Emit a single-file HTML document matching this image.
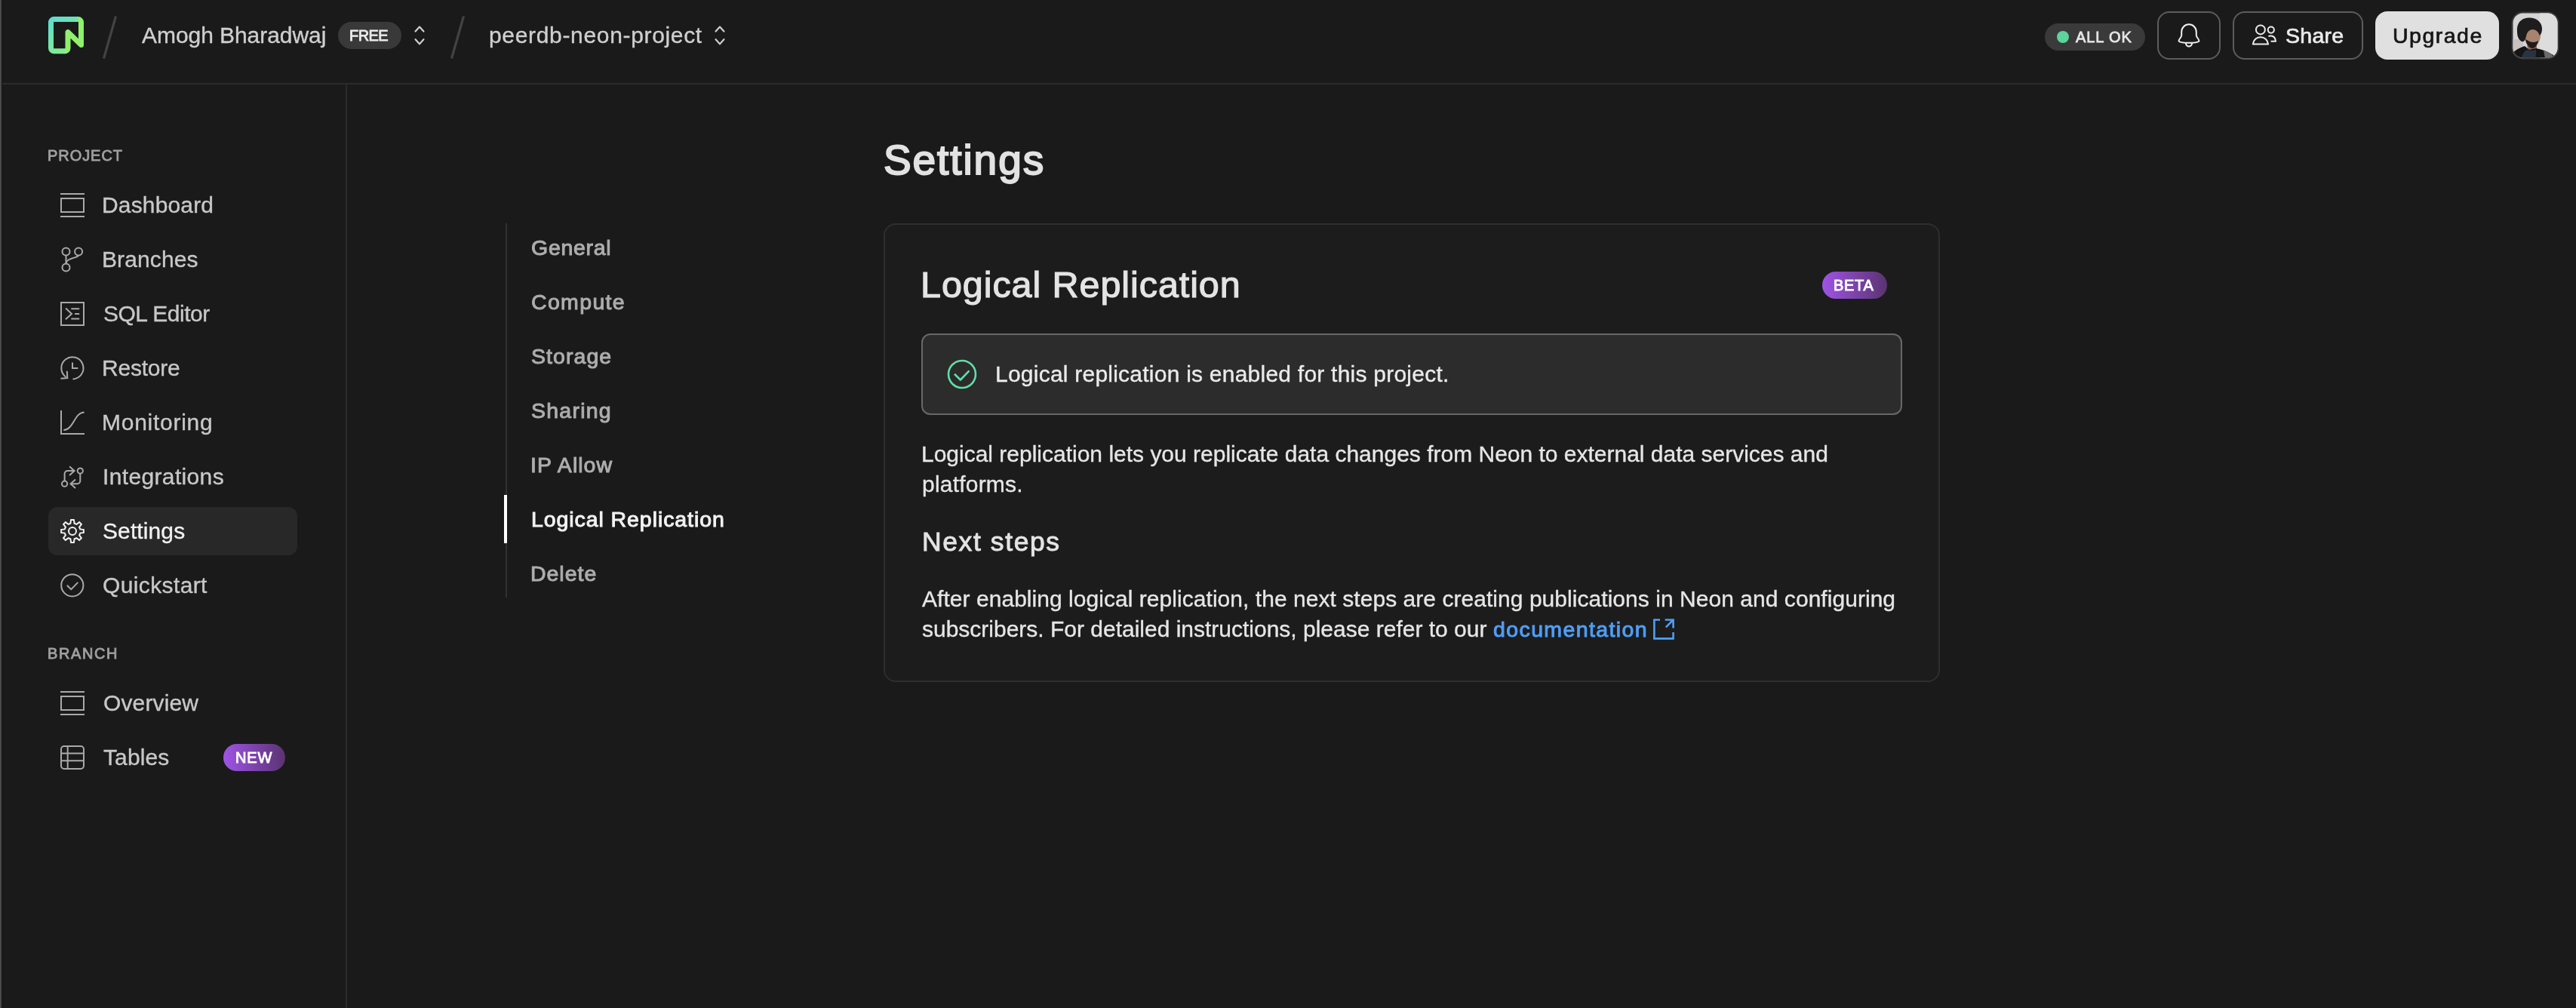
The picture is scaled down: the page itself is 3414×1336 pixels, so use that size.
<!DOCTYPE html>
<html><head><meta charset="utf-8">
<style>
html,body{margin:0;padding:0;width:3414px;height:1336px;overflow:hidden;background:#1a1a1a;}
body{position:relative;font-family:"Liberation Sans",sans-serif;}
.t{position:absolute;white-space:nowrap;will-change:transform;}
.b{position:absolute;box-sizing:border-box;}
svg.ov{position:absolute;left:0;top:0;}
.measure{background:#000 !important;}
.measure .b,.measure svg.ov{display:none !important;}
.measure .t{color:#fff !important;}
</style></head><body>
<div class="b" style="left:0;top:0;width:2px;height:1336px;background:#4a4a4a"></div>
<div class="b" style="left:2px;top:0;width:1px;height:1336px;background:#161616"></div>
<div class="b" style="left:3px;top:110px;width:3411px;height:2px;background:#2b2b2b"></div>
<div class="b" style="left:458px;top:112px;width:2px;height:1224px;background:#2b2b2b"></div>
<!-- header badges/buttons -->
<div class="b" style="left:448px;top:29px;width:84px;height:36px;border-radius:18px;background:#393939"></div>
<div class="b" style="left:2710px;top:31px;width:133px;height:36px;border-radius:18px;background:#3a3a3a"></div>
<div class="b" style="left:2726px;top:41px;width:16px;height:16px;border-radius:8px;background:#5cd49b"></div>
<div class="b" style="left:2859px;top:15px;width:84px;height:64px;border-radius:16px;border:2px solid #5c5c5c"></div>
<div class="b" style="left:2959px;top:15px;width:173px;height:64px;border-radius:16px;border:2px solid #5c5c5c"></div>
<div class="b" style="left:3148px;top:15px;width:164px;height:64px;border-radius:16px;background:#e0e0e0"></div>
<!-- sidebar -->
<div class="b" style="left:64px;top:672px;width:330px;height:64px;border-radius:12px;background:#282828"></div>
<div class="b" style="left:296px;top:986px;width:82px;height:36px;border-radius:18px;background:linear-gradient(90deg,#9f54e6,#5a3371)"></div>
<!-- settings nav -->
<div class="b" style="left:670px;top:296px;width:2px;height:496px;background:#313131"></div>
<div class="b" style="left:668px;top:656px;width:4px;height:64px;background:#ffffff"></div>
<!-- card -->
<div class="b" style="left:1171px;top:296px;width:1400px;height:608px;border-radius:16px;border:2px solid #2e2e2e;background:#1c1c1c"></div>
<div class="b" style="left:2415px;top:360px;width:86px;height:36px;border-radius:18px;background:linear-gradient(90deg,#9f54e6,#5a3371)"></div>
<div class="b" style="left:1221px;top:442px;width:1300px;height:108px;border-radius:12px;border:2px solid #686868;background:#2c2c2c"></div>
<svg class="ov" width="3414" height="1336" viewBox="0 0 3414 1336">
<defs>
<linearGradient id="lg" gradientUnits="userSpaceOnUse" x1="64" y1="22" x2="100" y2="72"><stop offset="0" stop-color="#5bdbd6"/><stop offset="1" stop-color="#8fef7c"/></linearGradient>
<clipPath id="avc"><rect x="3330.5" y="17.5" width="59" height="59" rx="13"/></clipPath>
</defs>
<!-- logo -->
<g fill="none" stroke-width="7">
<path d="M104 25.5 H71.5 A4 4 0 0 0 67.5 29.5 V63.7 A4 4 0 0 0 71.5 67.7 H86.5" stroke="url(#lg)"/>
<path d="M103.5 25.5 A4 4 0 0 1 107.5 29.5 V59.4 L90 42.6 V63.7 A4 4 0 0 1 86 67.7 H86" stroke="#8ef06c" stroke-linejoin="round"/>
</g>
<!-- slashes -->
<g stroke="#434343" stroke-width="3.2">
<line x1="137.5" y1="77.5" x2="153.5" y2="21.5"/>
<line x1="598.5" y1="77.5" x2="614.5" y2="21.5"/>
</g>
<!-- chevrons -->
<g fill="none" stroke="#cfcfcf" stroke-width="2.2" stroke-linecap="round" stroke-linejoin="round">
<polyline points="550.6,41.6 556,35.6 561.4,41.6"/><polyline points="550.6,52.2 556,58.4 561.4,52.2"/>
<polyline points="948.6,41.6 954,35.6 959.4,41.6"/><polyline points="948.6,52.2 954,58.4 959.4,52.2"/>
</g>
<!-- bell -->
<g fill="none" stroke="#efefef" stroke-width="2" stroke-linejoin="round">
<path d="M2901 32.3 C2895.5 32.3 2891.2 36.8 2891.2 42.5 V46.8 C2891.2 49.5 2887.6 51.8 2887.6 54 C2887.6 56 2893.5 56.8 2901 56.8 C2908.5 56.8 2914.4 56 2914.4 54 C2914.4 51.8 2910.8 49.5 2910.8 46.8 V42.5 C2910.8 36.8 2906.5 32.3 2901 32.3 Z"/>
<path d="M2896.6 57 C2897.4 60 2899 61.6 2901 61.6 C2903 61.6 2904.6 60 2905.4 57"/>
</g>
<!-- share icon -->
<g fill="none" stroke="#ececec" stroke-width="2" stroke-linejoin="round">
<circle cx="2995.9" cy="39.4" r="6"/>
<path d="M2985.8 58.6 C2986.4 52.8 2990.6 49.2 2995.9 49.2 C3001.2 49.2 3005.4 52.8 3006.1 58.6 Z"/>
<circle cx="3009.8" cy="39.6" r="4.1"/>
<path d="M3006.4 48.2 C3007.4 47.6 3008.5 47.4 3009.6 47.4 C3013.2 47.4 3015.9 50.6 3016 54.8 H3009.6"/>
</g>
<!-- avatar -->
<rect x="3328.5" y="15.5" width="63" height="63" rx="15" fill="#3a3a3a"/>
<g clip-path="url(#avc)">
<rect x="3330" y="17" width="60" height="60" fill="#d4d4d4"/>
<rect x="3366" y="17" width="24" height="60" fill="#dddddd"/>
<rect x="3330" y="52" width="14" height="25" fill="#c8c2c1"/>
<path d="M3349 60 L3351 68 H3362 L3362 60 Z" fill="#8a6552"/>
<path d="M3346 47 C3346 40 3351 36 3357 36 C3364 36 3368 41 3367 48 C3366 56 3362 62 3356 63 C3350 63 3346 56 3346 47 Z" fill="#a88370"/>
<path d="M3347 52 C3348 59 3352 63.5 3356 64 C3360 64 3363 59 3364 54 C3361 56 3357 56.5 3354 55.5 C3351 54.5 3349 53 3347 52 Z" fill="#211a18"/>
<path d="M3336 42 C3335 31 3341 24 3351 23.5 C3361 23 3369 29 3369 38 C3369 42 3368 45 3366 47 C3364 42 3361 39 3356 39 C3351 40 3349 43 3348 48 C3347 52 3346 56 3342 55 C3338 53 3336 48 3336 42 Z" fill="#1d1d1d"/>
<path d="M3330 77 V70 C3334 66 3340 63 3346 61 L3352 66 L3361 64 C3368 65 3376 68 3384 73 L3386 77 Z" fill="#151515"/>
<path d="M3342 77 C3343 71 3346 67 3350 66 C3355 67.5 3358 67.5 3361 65.5 C3361 71 3361 74 3360 77 Z" fill="#2a3342"/>
<path d="M3371 67 C3377 68 3382 71 3385 77 H3373 Z" fill="#6a6a6a"/>
</g>
<!-- sidebar icons -->
<g fill="none" stroke="#a9a9a9" stroke-width="2">
<!-- dashboard -->
<path d="M80 257 H112 M80 287 H112"/><rect x="81" y="263" width="30" height="18"/>
<!-- branches -->
<circle cx="87.5" cy="333.4" r="5"/><circle cx="104.1" cy="333.4" r="5"/><circle cx="87.5" cy="354.5" r="5"/>
<path d="M87.5 338.4 V349.5"/><path d="M87.5 349 C88.5 345 91 344 96 342.3 C101 340.6 104.1 340 104.1 338.4"/>
<!-- sql -->
<rect x="81" y="401" width="30" height="30"/>
<path d="M87.1 408.6 L95 416 L86.9 423.3"/><path d="M94.3 409.3 H105.2 M99.1 416 H105.2 M94.3 422.6 H105.2"/>
<!-- restore -->
<path d="M96.5 502.4 A14.6 14.6 0 1 0 87.4 499.7"/><path d="M88.8 491.8 L89.3 501 L80.5 501.8"/><path d="M96 480.4 V488 H103.3"/>
<!-- monitoring -->
<path d="M81 544 V575 H112"/><path d="M84.3 569.9 C97.5 569.9 98.5 546.5 111.6 546.5"/>
<!-- integrations -->
<circle cx="85.6" cy="641.2" r="3.6"/><circle cx="106.3" cy="624" r="3.6"/>
<path d="M85.6 637.6 V628 A4 4 0 0 1 89.6 624 H98.6"/><path d="M92.1 618.2 L98.6 624 L92.1 630"/>
<path d="M106.3 627.6 V637.2 A4 4 0 0 1 102.3 641.2 H93.6"/><path d="M100 635.4 L93.6 641.2 L100 647"/>
<!-- quickstart -->
<circle cx="95.8" cy="775.8" r="14.6"/><path d="M88.8 775.8 L94.3 781.1 L103.3 771.9"/>
<!-- overview -->
<path d="M80 917 H112 M80 947 H112"/><rect x="81" y="923" width="30" height="18"/>
<!-- tables -->
<rect x="81" y="989" width="30" height="30" rx="4"/><path d="M89.7 989 V1019 M81 998.6 H111 M81 1008.2 H111"/>
</g>
<!-- gear -->
<g fill="none" stroke="#f2f2f2" stroke-width="2">
<path d="M93.40 693.72 L94.10 689.12 L97.90 689.12 L98.60 693.72 L101.43 694.90 L105.18 692.14 L107.86 694.82 L105.10 698.57 L106.28 701.40 L110.88 702.10 L110.88 705.90 L106.28 706.60 L105.10 709.43 L107.86 713.18 L105.18 715.86 L101.43 713.10 L98.60 714.28 L97.90 718.88 L94.10 718.88 L93.40 714.28 L90.57 713.10 L86.82 715.86 L84.14 713.18 L86.90 709.43 L85.72 706.60 L81.12 705.90 L81.12 702.10 L85.72 701.40 L86.90 698.57 L84.14 694.82 L86.82 692.14 L90.57 694.90 Z"/><circle cx="96" cy="704" r="5"/>
</g>
<!-- alert check -->
<g fill="none" stroke="#63dcaa" stroke-width="2.6" stroke-linejoin="round">
<circle cx="1275" cy="496" r="18"/><path d="M1265 495.8 L1272.9 503.5 L1284.5 491.3"/>
</g>
<!-- external link -->
<g fill="none" stroke="#4f9ef7" stroke-width="2.6">
<path d="M2200 821.5 H2192.4 V846.4 H2217.6 V838"/><path d="M2206.7 821.5 H2217.6 V832.6 M2217.6 821.5 L2207.8 831.3"/>
</g>
</svg>
<div class="t" id="amogh" style="left:188.13px;top:32px;font-size:30px;line-height:30px;font-weight:400;color:#cfcfcf;letter-spacing:-0.059px;-webkit-text-stroke:0.35px #cfcfcf">Amogh Bharadwaj</div>
<div class="t" id="free" style="left:463.41px;top:37px;font-size:20px;line-height:20px;font-weight:400;color:#ececec;letter-spacing:-0.556px;-webkit-text-stroke:0.8px #ececec">FREE</div>
<div class="t" id="proj" style="left:648.19px;top:32px;font-size:30px;line-height:30px;font-weight:400;color:#cfcfcf;letter-spacing:0.668px;-webkit-text-stroke:0.35px #cfcfcf">peerdb-neon-project</div>
<div class="t" id="allok" style="left:2751.33px;top:39px;font-size:20px;line-height:20px;font-weight:400;color:#e6e6e6;letter-spacing:0.896px;-webkit-text-stroke:0.8px #e6e6e6">ALL OK</div>
<div class="t" id="share" style="left:3028.80px;top:33px;font-size:28.5px;line-height:28.5px;font-weight:400;color:#ececec;letter-spacing:0.290px;-webkit-text-stroke:0.7px #ececec">Share</div>
<div class="t" id="upgrade" style="left:3170.85px;top:33px;font-size:28.5px;line-height:28.5px;font-weight:400;color:#161616;letter-spacing:1.488px;-webkit-text-stroke:0.7px #161616">Upgrade</div>
<div class="t" id="lproject" style="left:63.26px;top:196px;font-size:20px;line-height:20px;font-weight:400;color:#a0a0a0;letter-spacing:0.946px;-webkit-text-stroke:0.8px #a0a0a0">PROJECT</div>
<div class="t" id="dash" style="left:135.24px;top:257px;font-size:30px;line-height:30px;font-weight:400;color:#c8c8c8;letter-spacing:0.156px;-webkit-text-stroke:0.35px #c8c8c8">Dashboard</div>
<div class="t" id="branches" style="left:135.24px;top:329px;font-size:30px;line-height:30px;font-weight:400;color:#c8c8c8;letter-spacing:0.103px;-webkit-text-stroke:0.35px #c8c8c8">Branches</div>
<div class="t" id="sql" style="left:136.68px;top:401px;font-size:30px;line-height:30px;font-weight:400;color:#c8c8c8;letter-spacing:-0.490px;-webkit-text-stroke:0.35px #c8c8c8">SQL Editor</div>
<div class="t" id="restore" style="left:135.24px;top:473px;font-size:30px;line-height:30px;font-weight:400;color:#c8c8c8;letter-spacing:-0.230px;-webkit-text-stroke:0.35px #c8c8c8">Restore</div>
<div class="t" id="monitor" style="left:135.24px;top:545px;font-size:30px;line-height:30px;font-weight:400;color:#c8c8c8;letter-spacing:0.736px;-webkit-text-stroke:0.35px #c8c8c8">Monitoring</div>
<div class="t" id="integ" style="left:135.51px;top:617px;font-size:30px;line-height:30px;font-weight:400;color:#c8c8c8;letter-spacing:0.354px;-webkit-text-stroke:0.35px #c8c8c8">Integrations</div>
<div class="t" id="settings" style="left:136.24px;top:689px;font-size:30px;line-height:30px;font-weight:400;color:#f2f2f2;letter-spacing:0.104px;-webkit-text-stroke:0.3px #f2f2f2">Settings</div>
<div class="t" id="quick" style="left:136.06px;top:761px;font-size:30px;line-height:30px;font-weight:400;color:#c8c8c8;letter-spacing:0.381px;-webkit-text-stroke:0.35px #c8c8c8">Quickstart</div>
<div class="t" id="lbranch" style="left:63.26px;top:856px;font-size:20px;line-height:20px;font-weight:400;color:#a0a0a0;letter-spacing:1.603px;-webkit-text-stroke:0.8px #a0a0a0">BRANCH</div>
<div class="t" id="overview" style="left:137.03px;top:917px;font-size:30px;line-height:30px;font-weight:400;color:#c8c8c8;letter-spacing:0.134px;-webkit-text-stroke:0.35px #c8c8c8">Overview</div>
<div class="t" id="tables" style="left:137.11px;top:989px;font-size:30px;line-height:30px;font-weight:400;color:#c8c8c8;letter-spacing:0.122px;-webkit-text-stroke:0.35px #c8c8c8">Tables</div>
<div class="t" id="new" style="left:312.19px;top:994px;font-size:20px;line-height:20px;font-weight:400;color:#ffffff;letter-spacing:0.835px;-webkit-text-stroke:0.9px #ffffff">NEW</div>
<div class="t" id="general" style="left:704.07px;top:314px;font-size:28.5px;line-height:28.5px;font-weight:400;color:#adadad;letter-spacing:0.708px;-webkit-text-stroke:1.0px #adadad">General</div>
<div class="t" id="compute" style="left:704.07px;top:386px;font-size:28.5px;line-height:28.5px;font-weight:400;color:#adadad;letter-spacing:1.342px;-webkit-text-stroke:1.0px #adadad">Compute</div>
<div class="t" id="storage" style="left:704.06px;top:458px;font-size:28.5px;line-height:28.5px;font-weight:400;color:#adadad;letter-spacing:1.056px;-webkit-text-stroke:1.0px #adadad">Storage</div>
<div class="t" id="sharing" style="left:704.06px;top:530px;font-size:28.5px;line-height:28.5px;font-weight:400;color:#adadad;letter-spacing:1.240px;-webkit-text-stroke:1.0px #adadad">Sharing</div>
<div class="t" id="ipallow" style="left:702.86px;top:602px;font-size:28.5px;line-height:28.5px;font-weight:400;color:#adadad;letter-spacing:1.029px;-webkit-text-stroke:1.0px #adadad">IP Allow</div>
<div class="t" id="lrnav" style="left:703.80px;top:674px;font-size:28.5px;line-height:28.5px;font-weight:400;color:#f2f2f2;letter-spacing:0.920px;-webkit-text-stroke:1.0px #f2f2f2">Logical Replication</div>
<div class="t" id="delete" style="left:703.09px;top:746px;font-size:28.5px;line-height:28.5px;font-weight:400;color:#adadad;letter-spacing:0.969px;-webkit-text-stroke:1.0px #adadad">Delete</div>
<div class="t" id="title" style="left:1171.15px;top:185px;font-size:55px;line-height:55px;font-weight:400;color:#e2e2e2;letter-spacing:1.914px;-webkit-text-stroke:2.0px #e2e2e2">Settings</div>
<div class="t" id="cardtitle" style="left:1220.44px;top:353px;font-size:48.5px;line-height:48.5px;font-weight:400;color:#e4e4e4;letter-spacing:0.924px;-webkit-text-stroke:1.2px #e4e4e4">Logical Replication</div>
<div class="t" id="beta" style="left:2430.19px;top:368px;font-size:20px;line-height:20px;font-weight:400;color:#ffffff;letter-spacing:0.722px;-webkit-text-stroke:0.9px #ffffff">BETA</div>
<div class="t" id="alert" style="left:1319.38px;top:481px;font-size:30px;line-height:30px;font-weight:400;color:#ebebeb;letter-spacing:0.233px;-webkit-text-stroke:0.35px #ebebeb">Logical replication is enabled for this project.</div>
<div class="t" id="p1a" style="left:1221.31px;top:587px;font-size:30px;line-height:30px;font-weight:400;color:#e6e6e6;letter-spacing:-0.005px;-webkit-text-stroke:0.35px #e6e6e6">Logical replication lets you replicate data changes from Neon to external data services and</div>
<div class="t" id="p1b" style="left:1222.14px;top:627px;font-size:30px;line-height:30px;font-weight:400;color:#e6e6e6;letter-spacing:0.213px;-webkit-text-stroke:0.35px #e6e6e6">platforms.</div>
<div class="t" id="next" style="left:1221.73px;top:701px;font-size:35.5px;line-height:35.5px;font-weight:400;color:#e4e4e4;letter-spacing:1.601px;-webkit-text-stroke:0.9px #e4e4e4">Next steps</div>
<div class="t" id="p2a" style="left:1222.22px;top:779px;font-size:30px;line-height:30px;font-weight:400;color:#e6e6e6;letter-spacing:0.043px;-webkit-text-stroke:0.35px #e6e6e6">After enabling logical replication, the next steps are creating publications in Neon and configuring</div>
<div class="t" id="p2b" style="left:1222.44px;top:819px;font-size:30px;line-height:30px;font-weight:400;color:#e6e6e6;letter-spacing:-0.005px;-webkit-text-stroke:0.35px #e6e6e6">subscribers. For detailed instructions, please refer to our</div>
<div class="t" id="doc" style="left:1979.45px;top:820px;font-size:28.5px;line-height:28.5px;font-weight:400;color:#4f9ef7;letter-spacing:1.392px;-webkit-text-stroke:1.0px #4f9ef7">documentation</div>
</body></html>
